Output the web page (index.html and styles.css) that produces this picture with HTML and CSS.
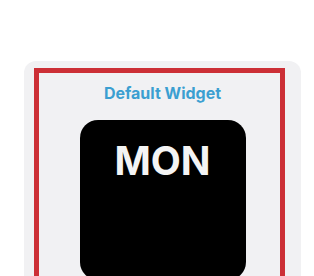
FILE: index.html
```html
<!DOCTYPE html>
<html lang="en">
<head>
  <meta charset="UTF-8">
  <meta name="viewport" content="width=device-width, initial-scale=1.0">
  <title>Default Widget</title>
  <link rel="stylesheet" href="styles.css">
</head>
<body>
  <div class="card">
    <div class="frame">
      <div class="title">Default Widget</div>
      <div class="widget">
        <div class="day">MON</div>
      </div>
    </div>
  </div>
</body>
</html>
```

FILE: styles.css
```css
body {
  margin: 0;
  background-color: #fff;
  font-family: Inter, "Noto Sans", sans-serif;
  overflow: hidden;
  height: 276px;
}

.card {
  margin: 61px 0 0 24px;
  width: 277px;
  height: 215px;
  padding: 7px 16px 0 10px;
  box-sizing: border-box;
  background-color: #f1f1f3;
  border-radius: 12px 12px 0 0;
  overflow: hidden;
}

.frame {
  border: 5px solid #cc2f36;
  border-bottom: none;
  height: 208px;
  box-sizing: border-box;
  padding: 10px 0 0 6px;
  display: flex;
  flex-direction: column;
  align-items: center;
  overflow: hidden;
}

.title {
  font-size: 16px;
  line-height: 20px;
  font-weight: 700;
  color: #3b9fd1;
  flex-shrink: 0;
}

.widget {
  margin-top: 17px;
  width: 166px;
  height: 160px;
  flex-shrink: 0;
  background-color: #000;
  border-radius: 18px;
  display: flex;
  justify-content: center;
}

.day {
  margin-top: 21px;
  font-size: 39px;
  line-height: 39px;
  font-weight: 700;
  color: #f4f4f4;
}
```
